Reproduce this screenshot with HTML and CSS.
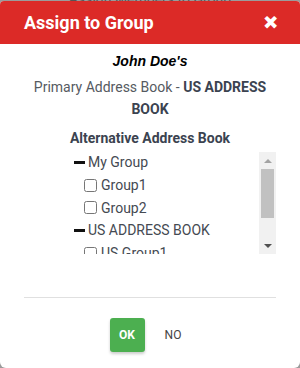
FILE: index.html
```html
<!DOCTYPE html>
<html>
<head>
<meta charset="utf-8">
<link rel="stylesheet" href="styles.css">
</head>
<body>
<div class="behind">Assign Members to Group</div>
<div class="dialog">
  <div class="header">
    <span class="title">Assign to Group</span>
    <span class="close">&#x2715;</span>
  </div>
  <div class="content">
    <div class="owner">John Doe's</div>
    <div class="primary">Primary Address Book - <b>US ADDRESS BOOK</b></div>
    <div class="alt">Alternative Address Book</div>
    <div class="listbox">
      <div class="list">
        <div class="grp"><span class="dash"></span>My Group</div>
        <label class="item"><input type="checkbox">Group1</label>
        <label class="item"><input type="checkbox">Group2</label>
        <div class="grp"><span class="dash"></span>US ADDRESS BOOK</div>
        <label class="item"><input type="checkbox">US Group1</label>
      </div>
      <div class="scrollbar">
        <span class="arrow up"></span>
        <span class="thumb"></span>
        <span class="arrow down"></span>
      </div>
    </div>
  </div>
  <div class="footer">
    <button class="ok">OK</button>
    <button class="no">NO</button>
  </div>
</div>
</body>
</html>
```
FILE: styles.css
```css
html, body {
  margin: 0;
  padding: 0;
}
body {
  width: 300px;
  height: 368px;
  overflow: hidden;
  background: #9b9b9b;
  font-family: Roboto, "Liberation Sans", sans-serif;
  position: relative;
}
.behind {
  position: absolute;
  top: -9px;
  left: 0;
  width: 300px;
  text-align: center;
  font-size: 14px;
  color: #555;
}
.dialog {
  position: relative;
  margin-top: 1px;
  height: 367px;
  background: #fff;
  border-radius: 4px 4px 6px 6px;
  overflow: hidden;
  display: flex;
  flex-direction: column;
}
.header {
  height: 43px;
  background: #dc2a27;
  display: flex;
  align-items: center;
  justify-content: space-between;
  padding: 0 23px 0 24px;
  color: #fff;
}
.title {
  font-size: 18px;
  font-weight: 700;
}
.close {
  font-size: 16px;
  font-weight: 900;
  -webkit-text-stroke: 1.6px #fff;
}
.content {
  text-align: center;
  padding: 8px 24px 0;
}
.owner {
  font-family: "Liberation Sans", Arial, sans-serif;
  font-style: italic;
  font-weight: 700;
  font-size: 14px;
  color: #000;
  line-height: 18px;
}
.primary {
  margin-top: 6px;
  font-size: 14px;
  line-height: 22px;
  color: #555a61;
  padding: 0 6px;
}
.primary b {
  color: #3b4350;
}
.alt {
  margin-top: 9px;
  font-size: 14px;
  font-weight: 700;
  line-height: 18px;
  color: #3b4350;
}
.listbox {
  margin: 5px 0 0 46px;
  height: 102px;
  display: flex;
  text-align: left;
  overflow: hidden;
}
.list {
  flex: 1;
  padding-left: 4px;
  font-size: 14px;
  color: #454a52;
}
.grp, .item {
  display: flex;
  align-items: center;
  height: 22.7px;
}
.grp:first-child {
  margin-top: -1px;
}
.dash {
  width: 11px;
  height: 3px;
  background: #111;
  margin-right: 3px;
}
.item {
  padding-left: 10px;
}
.item input {
  width: 13px;
  height: 13px;
  margin: 0 4px 0 0;
}
.scrollbar {
  width: 17px;
  background: #f1f1f1;
  display: flex;
  flex-direction: column;
  align-items: center;
}
.arrow {
  width: 0;
  height: 0;
  border-left: 4px solid transparent;
  border-right: 4px solid transparent;
}
.arrow.up {
  margin-top: 7px;
  border-bottom: 4px solid #a3a3a3;
}
.arrow.down {
  margin-top: auto;
  margin-bottom: 6px;
  border-top: 4px solid #505050;
}
.thumb {
  margin-top: 6px;
  width: 13px;
  height: 49px;
  background: #c1c1c1;
}
.footer {
  margin: auto 24px 0;
  border-top: 1px solid #e0e0e0;
  height: 71px;
  display: flex;
  justify-content: center;
  align-items: flex-start;
  padding-top: 20px;
  box-sizing: border-box;
  gap: 11px;
}
.ok, .no {
  font-family: Roboto, sans-serif;
  font-size: 12px;
  border: none;
  border-radius: 3px;
  height: 34px;
  padding: 0;
  cursor: pointer;
}
.ok {
  width: 35px;
  background: #4caf50;
  color: #fff;
  font-weight: 700;
  box-shadow: 0 2px 3px rgba(0,0,0,0.2);
}
.no {
  width: 35px;
  background: transparent;
  color: #444;
}
```
